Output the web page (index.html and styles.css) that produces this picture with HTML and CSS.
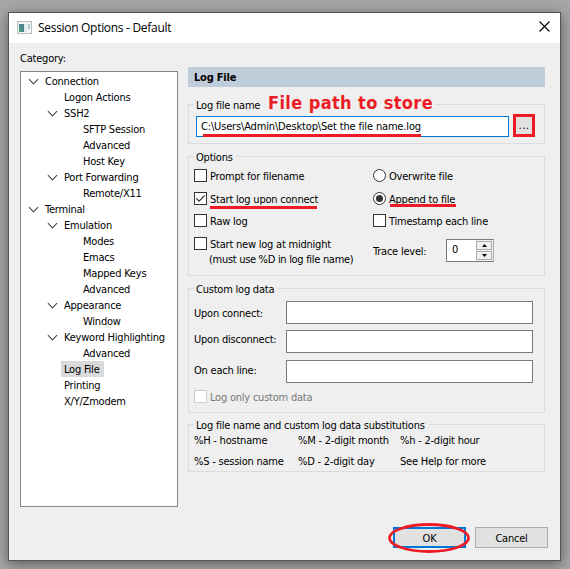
FILE: index.html
```html
<!DOCTYPE html>
<html lang="en">
<head>
<meta charset="utf-8">
<title>Session Options - Default</title>
<link rel="stylesheet" href="styles.css">
</head>
<body>
<div class="window">
  <header class="titlebar">
    <svg class="app-icon" width="15" height="13" viewBox="0 0 15 13"><rect x=".5" y=".5" width="14" height="12" fill="#f4f6f6" stroke="#b9bdbe"/><rect x="2" y="3" width="5" height="8" fill="#4b8589"/><rect x="2" y="7" width="3" height="4" fill="#4c9d7c"/><rect x="7" y="3" width="3" height="8" fill="#e4eaeb"/><rect x="11" y="3" width="2" height="5" fill="#a9c8c7"/></svg>
    <span class="title">Session Options - Default</span>
    <svg class="close" width="11" height="11" viewBox="0 0 11 11"><path d="M.5.5l10 10M10.5.5l-10 10" stroke="#000" stroke-width="1.1"/></svg>
  </header>
  <div class="body">
    <aside class="sidebar">
      <div class="category">Category:</div>
      <ul class="tree">
        <li class="l1 open"><span>Connection</span></li>
        <li class="l2"><span>Logon Actions</span></li>
        <li class="l2 open"><span>SSH2</span></li>
        <li class="l3"><span>SFTP Session</span></li>
        <li class="l3"><span>Advanced</span></li>
        <li class="l3"><span>Host Key</span></li>
        <li class="l2 open"><span>Port Forwarding</span></li>
        <li class="l3"><span>Remote/X11</span></li>
        <li class="l1 open"><span>Terminal</span></li>
        <li class="l2 open"><span>Emulation</span></li>
        <li class="l3"><span>Modes</span></li>
        <li class="l3"><span>Emacs</span></li>
        <li class="l3"><span>Mapped Keys</span></li>
        <li class="l3"><span>Advanced</span></li>
        <li class="l2 open"><span>Appearance</span></li>
        <li class="l3"><span>Window</span></li>
        <li class="l2 open"><span>Keyword Highlighting</span></li>
        <li class="l3"><span>Advanced</span></li>
        <li class="l2 selected"><span>Log File</span></li>
        <li class="l2"><span>Printing</span></li>
        <li class="l2"><span>X/Y/Zmodem</span></li>
      </ul>
    </aside>
    <main class="page">
      <h1 class="page-title">Log File</h1>
      <section class="group file">
        <h2>Log file name</h2>
        <div class="note">File path to store</div>
        <div class="path"><span>C:\Users\Admin\Desktop\Set the file name.log</span><i class="mark mark-path"></i></div>
        <div class="browse">...</div>
      </section>
      <section class="group options">
        <h2>Options</h2>
        <div class="col left">
          <label><i class="box"></i>Prompt for filename</label>
          <label><i class="box"><svg width="11" height="11" viewBox="0 0 11 11"><path d="M1.3 5.3l2.8 2.9L9.8 2.4" fill="none" stroke="#333" stroke-width="1.2"/></svg></i>Start log upon connect<i class="mark mark-start"></i></label>
          <label><i class="box"></i>Raw log</label>
          <label><i class="box"></i>Start new log at midnight</label>
          <div class="hint">(must use %D in log file name)</div>
        </div>
        <div class="col">
          <label><i class="radio"></i>Overwrite file</label>
          <label><i class="radio on"></i>Append to file<i class="mark mark-append"></i></label>
          <label><i class="box"></i>Timestamp each line</label>
          <div class="trace"><span>Trace level:</span>
            <div class="spin"><span>0</span><div class="arrows"><b><svg width="5" height="3" viewBox="0 0 5 3"><path d="M0 3L2.5 0L5 3z"/></svg></b><b><svg width="5" height="3" viewBox="0 0 5 3"><path d="M0 0L2.5 3L5 0z"/></svg></b></div></div>
          </div>
        </div>
      </section>
      <section class="group custom">
        <h2>Custom log data</h2>
        <div class="row"><span>Upon connect:</span><div class="field"></div></div>
        <div class="row second"><span>Upon disconnect:</span><div class="field"></div></div>
        <div class="row"><span>On each line:</span><div class="field"></div></div>
        <label class="disabled"><i class="box"></i>Log only custom data</label>
      </section>
      <section class="group subs">
        <h2>Log file name and custom log data substitutions</h2>
        <div class="codes"><span>%H - hostname</span><span>%M - 2-digit month</span><span>%h - 2-digit hour</span><span>%S - session name</span><span>%D - 2-digit day</span><span>See Help for more</span></div>
      </section>
      <div class="actions">
        <div class="button ok">OK<svg class="ring" width="84" height="32" viewBox="0 0 84 32"><ellipse cx="42" cy="16" rx="39.5" ry="13.5" fill="none" stroke="#ed1c24" stroke-width="2.8"/></svg></div>
        <div class="button">Cancel</div>
      </div>
    </main>
  </div>
</div>
</body>
</html>
```
FILE: styles.css
```css
* { box-sizing: border-box; }
body {
  margin: 0; width: 570px; height: 569px; overflow: hidden;
  padding: 12px 0 0 8px;
  background: #a6a6a6;
  font: 11px/16px "DejaVu Sans Condensed", "DejaVu Sans", sans-serif;
  font-stretch: condensed;
  letter-spacing: -0.22px;
  color: #000; white-space: nowrap;
}
ul, h1, h2 { margin: 0; padding: 0; list-style: none; font-size: inherit; font-weight: normal; }
svg { display: block; }
.window { width: 553px; height: 549px; border: 1px solid #555; background: #efefef; box-shadow: 0 3px 12px rgba(0,0,0,.45); }
.titlebar { height: 30px; background: #fff; display: flex; align-items: center; padding: 0 10px 0 8px; }
.app-icon { margin-top: -2px; }
.title { flex: 1; margin-left: 6px; font: 12px/16px "Open Sans", sans-serif; letter-spacing: -0.3px; }
.close { margin-top: -3px; }
.body { display: flex; padding-left: 11px; }
.sidebar { width: 158px; }
.category { padding-top: 8px; height: 28px; }
.tree { height: 436px; border: 1px solid #828790; background: #fff; padding-top: 1px; }
.tree li { height: 16px; display: flex; position: relative; }
.tree span { padding: 0 4px 0 3px; line-height: 18px; height: 16px; }
.l1 { padding-left: 21px; }
.l2 { padding-left: 40px; }
.l3 { padding-left: 59px; }
.selected span { background: #d9d9d9; }
.open::before { content: ""; position: absolute; top: 3px; width: 6px; height: 6px; border: solid #404040; border-width: 0 1.5px 1.5px 0; transform: rotate(45deg); }
.l1.open::before { left: 9px; }
.l2.open::before { left: 28px; }
.page { width: 357px; margin-left: 10px; padding-top: 24px; }
.page-title { height: 20px; background: #bfccda; padding-left: 6px; line-height: 21px; font-weight: bold; }
.group { position: relative; border: 1px solid #dcdcdc; }
.group h2 { position: absolute; left: 5px; top: -8px; padding: 0 4px 0 2px; background: #efefef; line-height: 18px; }
.file { margin-top: 17px; height: 40px; display: flex; padding: 9px 0 0 7px; }
.note { position: absolute; left: 76px; top: -14px; padding: 0 3px; background: #efefef; color: #ed1c24; font: bold 18px/24px "DejaVu Sans Condensed", sans-serif; font-stretch: condensed; letter-spacing: .38px; height: 22px; }
.path { position: relative; margin-top: 2px; width: 313px; height: 21px; border: 1px solid #0078d7; background: #fff; padding-left: 4px; line-height: 19px; letter-spacing: -.16px; }
.mark { position: absolute; height: 3px; background: #ed1c24; }
.mark-path { left: 6px; top: 17px; width: 218px; }
.browse { width: 22px; height: 23px; margin-left: 4px; border: 3px solid #ed1c24; background: #e1e1e1; text-align: center; line-height: 18px; letter-spacing: .5px; }
.options { margin-top: 12px; height: 120px; display: flex; padding: 12px 0 0 5px; }
.col { display: flex; flex-direction: column; }
.left { width: 179px; }
label { position: relative; display: flex; height: 13px; line-height: 16px; }
.col label { margin-bottom: 10px; }
.col label:nth-child(2) { margin-bottom: 9px; }
.box, .radio { width: 13px; height: 13px; border: 1px solid #333; background: #fff; margin-right: 3px; flex: none; }
.radio { border-radius: 50%; }
.on::before { content: ""; display: block; width: 7px; height: 7px; margin: 2px; border-radius: 50%; background: #333; }
.mark-start { left: 16px; top: 14px; width: 107px; }
.mark-append { left: 17px; top: 12px; width: 66px; }
.hint { padding-left: 15px; margin-top: -8px; letter-spacing: -.3px; }
.trace { display: flex; margin-top: 2px; line-height: 26px; }
.trace > span { width: 73px; }
.spin { display: flex; width: 48px; height: 23px; border: 1px solid #7a7a7a; border-right-color: #abadb3; background: #fff; padding-left: 5px; line-height: 20px; }
.spin > span { width: 24px; }
.arrows { width: 17px; height: 21px; background: #efefef; padding: 1px 1px 0 0; display: flex; flex-direction: column; gap: 1px; }
.arrows b { height: 9px; border: 1px solid #acacac; background: #f0f0f0; display: grid; place-items: center; }
.custom { margin-top: 12px; height: 125px; padding: 12px 0 0 5px; }
.row { display: flex; height: 23px; margin-bottom: 6px; line-height: 25px; }
.row.second { margin-bottom: 7px; line-height: 20px; }
.row span { width: 92px; }
.row:nth-child(4) span { line-height: 22px; }
.field { width: 247px; border: 1px solid #7a7a7a; background: #fff; }
.disabled { color: #777; margin-top: 7px; }
.disabled .box { border-color: #ccc; }
.subs { margin-top: 11px; height: 48px; padding: 8px 0 0 5px; }
.codes { display: grid; grid-template-columns: 104px 102px auto; row-gap: 5px; }
.actions { display: flex; gap: 9px; margin: 55px -3px 0 0; justify-content: flex-end; }
.button { position: relative; width: 73px; height: 21px; border: 1px solid #adadad; background: #e1e1e1; text-align: center; line-height: 21px; }
.ok { border: 2px solid #0078d7; line-height: 19px; }
.ring { position: absolute; left: -8px; top: -7px; }
```
